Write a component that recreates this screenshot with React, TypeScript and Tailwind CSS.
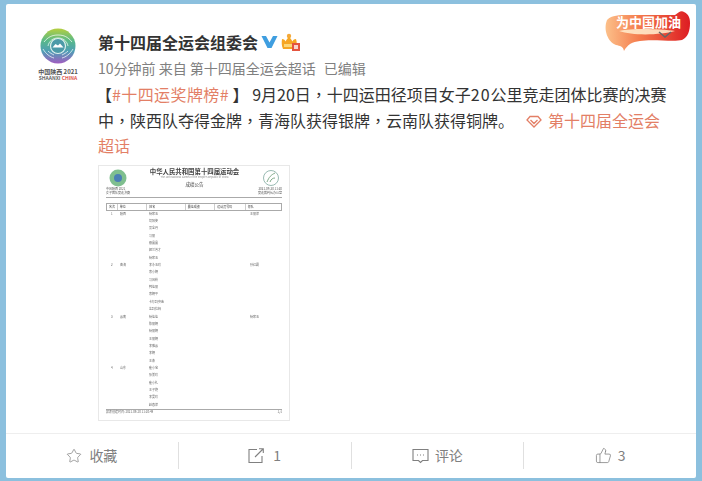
import { Star, ThumbsUp } from 'lucide-react';

const FONT = "font-['Microsoft_YaHei','Noto_Sans_CJK_SC','Liberation_Sans',sans-serif]";

const COLS = ['w-[11px]', 'w-[30px]', 'w-[39px]', 'w-[30px]', 'w-[31px]', 'w-[36px]'];
const HEAD = ['名次', '单位', '姓名', '最佳成绩', '运动员号码', '领队'];

// 每行:名次、单位、姓名、教练
const ROWS = [
    ['1', '陕西', '杨家玉', '王丽萍'],
    ['', '', '切阳姿', ''],
    ['', '', '吴全丹', ''],
    ['', '', '马丽', ''],
    ['', '', '聂晶晶', ''],
    ['', '', '姬兰芳才', ''],
    ['', '', '杨家玉', ''],
    ['2', '青海', '李永玉玲', '孙红霞'],
    ['', '', '索小娟', ''],
    ['', '', '马国粉', ''],
    ['', '', '韩佳丽', ''],
    ['', '', '索娟平', ''],
    ['', '', '卡尔玛央金', ''],
    ['', '', '达玛拉姆', ''],
    ['3', '云南', '杨佳佳', '杨家玉'],
    ['', '', '陈丽娟', ''],
    ['', '', '杨丽娟', ''],
    ['', '', '王丽娟', ''],
    ['', '', '李雅云', ''],
    ['', '', '李娟', ''],
    ['', '', '王燕', ''],
    ['4', '山东', '崔小宝', ''],
    ['', '', '张美玲', ''],
    ['', '', '崔小礼', ''],
    ['', '', '王子艳', ''],
    ['', '', '李曼玲', ''],
    ['', '', '赵春萍', ''],
];

const Logo = () => (
    <div className="flex w-[46px] flex-col items-center">
        <svg width="36" height="36" viewBox="0 0 36 36">
            <defs>
                <linearGradient id="logoRing" x1="0" y1="0" x2="0" y2="1">
                    <stop offset="0" stopColor="#b5cf3f" />
                    <stop offset="0.35" stopColor="#58b98a" />
                    <stop offset="0.65" stopColor="#4f9fb5" />
                    <stop offset="1" stopColor="#a05cc0" />
                </linearGradient>
            </defs>
            <circle cx="18" cy="18" r="17.5" fill="url(#logoRing)" />
            <path d="M4 14c4-5 8-7 14-7s10 2 14 7M3 21c3 5 7 8 11 9M33 21c-3 5-7 8-11 9M8 18c1-5 5-8 10-8s9 3 10 8M8 23c2 2 4 3 6 4M28 23c-2 2-4 3-6 4" fill="none" stroke="#fff" strokeWidth="1" opacity="0.7" />
            <circle cx="18" cy="18" r="7.5" fill="#4c9aa8" stroke="#dff1ee" strokeWidth="1.2" />
            <path d="M12.5 19.5l3-3.5 2.5 1.500 2-2 3.500 4z" fill="#fff" />
        </svg>
        <div className="mt-[4px] text-[6px] leading-[7px] font-bold whitespace-nowrap text-[#555]">中国陕西 2021</div>
        <div className="text-[5px] leading-[6px] font-bold whitespace-nowrap text-[#666]">
            SHAANXI <span className="text-[#e0574f]">CHINA</span>
        </div>
    </div>
);

const VerifiedIcon = () => (
    <svg width="17" height="14" viewBox="0 0 17 14">
        <path d="M0.5 1h4.5l3.5 6.5L12 1h4.500L10.500 13h-4z" fill="#3f9ee0" />
    </svg>
);

const CrownIcon = () => (
    <svg width="19" height="19" viewBox="0 0 19 19">
        <circle cx="8" cy="3" r="2.200" fill="#f4a93a" />
        <path d="M1 6c2 0 3 1 3.500 2.500C5.500 7 6.500 5 8 4c1.500 1 2.500 3 3.500 4.500C12 7 13 6 15 6c1 3 1 6 0 10H2C0.500 13 0.500 9 1 6z" fill="#f6a623" />
        <path d="M3 11h9v3H3z" fill="#fcd778" />
        <rect x="11" y="10" width="8" height="8" fill="#e4553f" />
        <rect x="13" y="12" width="4" height="4" fill="#fff" opacity="0.75" />
    </svg>
);

const Badge = () => (
    <div className="absolute top-[2px] right-[1px] h-[46px] w-[92px]">
        <svg width="92" height="46" viewBox="0 0 92 46" className="absolute inset-0">
            <defs>
                <linearGradient id="badgeFill" x1="0" y1="0" x2="1" y2="0">
                    <stop offset="0" stopColor="#fcc08a" />
                    <stop offset="0.4" stopColor="#f47b4c" />
                    <stop offset="1" stopColor="#dd1c22" />
                </linearGradient>
            </defs>
            <path d="M4 14c5-5 12-5 22-5h46c3-2 6-5 9-3 4 2 6 5 6 11 0 8-2 14-8 17-8 2-30-1-42 1-8 1-12 3-16 10-1-5-4-5-8-6C5 36 0 24 4 14z" fill="url(#badgeFill)" />
            <path d="M16 25c14-3 42-2 56 0-14 4-42 5-56 0z" fill="#ffe9c9" opacity="0.9" />
            <path d="M56 26l6 5 6-5" fill="none" stroke="#666" strokeWidth="1.500" />
        </svg>
        <div className="absolute top-[8px] left-[13px] text-[13px] leading-[16px] font-bold whitespace-nowrap text-white">为中国加油</div>
    </div>
);

const ReportImage = () => (
    <div className="flex h-[256px] w-[192px] flex-col border border-[#e8e8e8] bg-white px-[7px] pt-[2px] text-[#666] blur-[0.3px]">
        <div className="flex h-[24px] justify-between">
            <svg width="18" height="18" viewBox="0 0 18 18" className="mt-[1px] ml-[3px]">
                <circle cx="9" cy="9" r="8.500" fill="#7fbf8f" />
                <circle cx="9" cy="9" r="4" fill="#4a7fb5" />
            </svg>
            <div className="flex flex-col items-center">
                <div className="text-[6.400px] leading-[8px] font-bold text-[#444]">中华人民共和国第十四届运动会</div>
                <div className="text-[2.500px] leading-[3px] text-[#888]">The 14th National Games of the People's Republic of China</div>
                <div className="mt-[2px] text-[4.500px] leading-[6px] text-[#444]">成绩公告</div>
            </div>
            <svg width="18" height="18" viewBox="0 0 18 18" className="mt-[1px] mr-[2px]">
                <circle cx="9" cy="9" r="7.500" fill="none" stroke="#7fa8a0" strokeWidth="0.800" />
                <path d="M5 13c2-5 4-7 8-9M8 13c1-3 3-4 5-4" fill="none" stroke="#6f9f7a" strokeWidth="0.900" />
            </svg>
        </div>
        <div className="flex justify-between text-[3px] leading-[4px] text-[#555]">
            <span>中国陕西 2021</span>
            <span>2021-09-20 11:20</span>
        </div>
        <div className="flex justify-between border-b border-[#aaa] pb-[2px] text-[3px] leading-[4px] text-[#555]">
            <span>女子团队竞走决赛</span>
            <span>竞走裁判长办公室</span>
        </div>
        <div className="mt-[5px] flex h-[8px] border border-[#aaa] text-[3px] leading-[6px] text-[#444]">
            {HEAD.map((h, i) => (
                <div key={h} className={`${COLS[i]} border-r border-[#ccc] pl-[2px] last:border-r-0`}>{h}</div>
            ))}
        </div>
        <div className="mt-[-1px] flex-1 pt-[1px] text-[3px] leading-[7.370px] text-[#666]">
            {ROWS.map((r, i) => (
                <div key={i} className="flex h-[7.370px]">
                    <div className="w-[11px] pl-[5px]">{r[0]}</div>
                    <div className="w-[30px] pl-[3px]">{r[1]}</div>
                    <div className="w-[100px] pl-[2px]">{r[2]}</div>
                    <div className="pl-[3px]">{r[3]}</div>
                </div>
            ))}
        </div>
        <div className="mb-[6px] flex justify-between border-t border-[#aaa] text-[3px] leading-[5px]">
            <span>报表创建时间: 2021-09-20 11:20:49</span>
            <span>1/1</span>
        </div>
    </div>
);

const ShareIcon = () => (
    <svg width="17" height="16" viewBox="0 0 17 16" fill="none" stroke="currentColor" strokeWidth="1.100">
        <path d="M9 1.500H1v13h13V8M7 9l8-8M11 .800h4.300v4.300" />
    </svg>
);

const CommentIcon = () => (
    <svg width="17" height="16" viewBox="0 0 17 16" fill="none" stroke="currentColor" strokeWidth="1.100">
        <path d="M1 1.500h15v11h-5.500l-2 2-2-2H1z" />
        <path d="M5 7h1M8 7h1M11 7h1" strokeWidth="1.200" />
    </svg>
);

const FooterItem = ({ icon, label, gap, divider }: { icon: React.ReactNode; label: string; gap: string; divider?: boolean }) => (
    <div className={`flex h-[27px] flex-1 items-center justify-center text-[14px] text-[#808080] ${gap} ${divider ? 'border-r border-[#e0e0e0]' : ''}`}>
        {icon}
        <span>{label}</span>
    </div>
);

// 全角逗号,参考图里是居中的字形,所以用 TC 字体
const Comma = () => <span className="font-['Noto_Sans_CJK_TC',sans-serif]">{'\uFF0C'}</span>;

const App = () => {
    return (
        <div className={`${FONT} h-[481px] w-[702px] overflow-hidden bg-[#8cc0de] pt-[4px] pr-[6px] pb-[3px] pl-[6px]`}>
            <div className="relative flex h-full flex-col rounded-[2px] bg-white">
                <Badge />
                <div className="flex flex-1 pt-[24px] pl-[29px]">
                    <Logo />
                    <div className="ml-[17px] w-[575px]">
                        <div className="flex h-[28px] items-center gap-[3px]">
                            <span className="text-[16px] font-bold text-[#333]">第十四届全运会组委会</span>
                            <VerifiedIcon />
                            <CrownIcon />
                        </div>
                        <div className="mt-[2px] flex h-[20px] items-center text-[14px] text-[#808080]">
                            <span>10分钟前 来自 第十四届全运会超话</span>
                            <span className="ml-[8px]">已编辑</span>
                        </div>
                        <div className="mt-[4px] text-[16px] leading-[25.500px] text-[#333]">
                            <span className="ml-[-2px]">【</span>
                            <a className="tracking-[0.4px] text-[#e37f66]">#十四运奖牌榜#</a> 】 9月20日<Comma />十四运田径项目女子<span className="tracking-[1px]">20</span>公里竞走团体比赛的决赛中<Comma />陕西队夺得金牌<Comma />青海队获得银牌<Comma />云南队获得铜牌。
                            <span className="ml-[12px] text-[#e37f66]">
                                <svg width="16" height="13" viewBox="0 0 16 13" className="mr-[6px] inline-block align-[-1px]">
                                    <path d="M4 1.500h8l3 3.500-7 7-7-7zM4.500 5l3.500 3.500L11.500 5" fill="none" stroke="#e37f66" strokeWidth="1.300" />
                                </svg>
                                第十四届全运会超话
                            </span>
                        </div>
                        <div className="mt-[6px]">
                            <ReportImage />
                        </div>
                    </div>
                </div>
                <div className="flex h-[45px] items-start border-t border-[#eeeeee] pt-[8px]">
                    <FooterItem divider gap="gap-[7px]" label="收藏" icon={<Star size={16} strokeWidth={1.100} />} />
                    <FooterItem divider gap="gap-[8px]" label="1" icon={<ShareIcon />} />
                    <FooterItem divider gap="gap-[6px]" label="评论" icon={<CommentIcon />} />
                    <FooterItem gap="gap-[6px]" label="3" icon={<ThumbsUp size={17} strokeWidth={1.100} />} />
                </div>
            </div>
        </div>
    );
};

export default App;
